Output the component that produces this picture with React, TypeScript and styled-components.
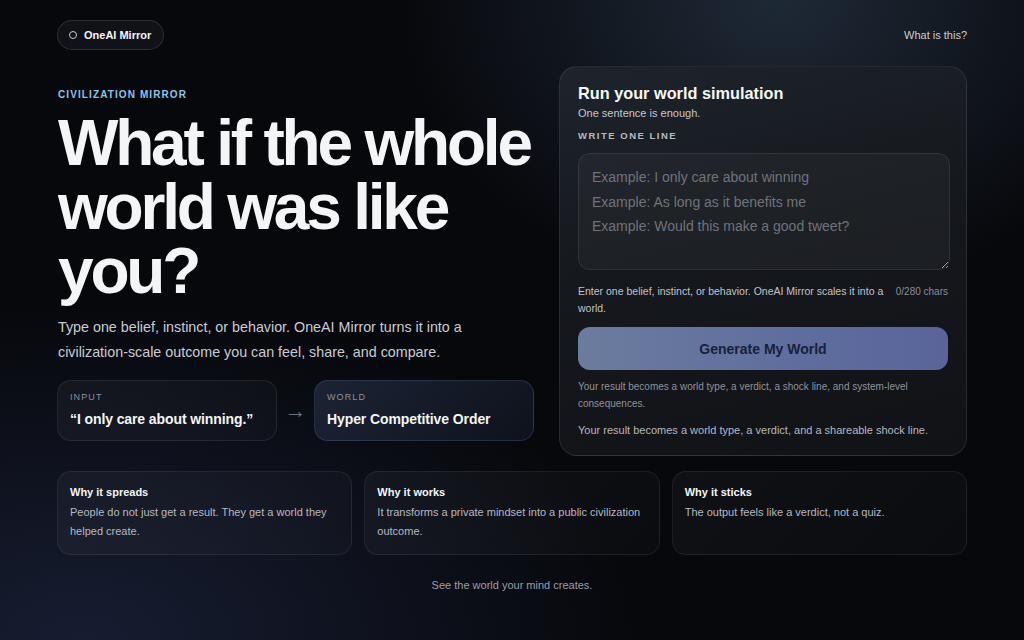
import React from "react";
import styled, { createGlobalStyle } from "styled-components";

const GlobalStyle = createGlobalStyle`
  html, body { margin: 0; padding: 0; }
  body {
    background: #07080c;
    font-family: "Liberation Sans", Arial, Helvetica, sans-serif;
    color: #f2f3f5;
    -webkit-font-smoothing: antialiased;
  }
  * { box-sizing: border-box; }
`;

const Page = styled.div`
  min-height: 640px;
  width: 100%;
  background:
    radial-gradient(ellipse 380px 300px at 76% 0%, rgba(38, 52, 68, 0.75), rgba(38, 52, 68, 0) 100%),
    radial-gradient(ellipse 560px 340px at 8% 100%, rgba(28, 36, 62, 0.75), rgba(28, 36, 62, 0) 100%),
    #07080c;
  display: flex;
  justify-content: center;
`;

const Container = styled.div`
  width: 910px;
  padding-top: 20px;
  display: flex;
  flex-direction: column;
`;

const Header = styled.header`
  display: flex;
  align-items: center;
  justify-content: space-between;
  height: 30px;
`;

const BrandPill = styled.div`
  display: inline-flex;
  align-items: center;
  gap: 7px;
  height: 30px;
  padding: 0 12px 0 11px;
  border-radius: 999px;
  border: 1px solid rgba(255, 255, 255, 0.12);
  background: #111217;
  font-size: 11px;
  font-weight: 700;
  color: #f4f5f7;
`;

const Ring = styled.span`
  width: 8px;
  height: 8px;
  border-radius: 50%;
  border: 1.5px solid #c9ccd2;
`;

const NavLink = styled.a`
  font-size: 11px;
  color: #c9ccd3;
  text-decoration: none;
`;

const Hero = styled.section`
  display: grid;
  grid-template-columns: 477px 408px;
  justify-content: space-between;
  align-items: start;
  margin-top: 16px;
`;

const Left = styled.div`
  display: flex;
  flex-direction: column;
  padding-top: 23px;
  padding-left: 1px;
`;

const Eyebrow = styled.div`
  font-size: 10px;
  line-height: 12px;
  font-weight: 700;
  letter-spacing: 1.1px;
  color: #8cc3e6;
`;

const Headline = styled.h1`
  margin: 10px 0 0;
  font-size: 64px;
  line-height: 64px;
  font-weight: 700;
  letter-spacing: -3.2px;
  color: #f4f5f7;
`;

const Lead = styled.p`
  margin: 12px 0 0;
  font-size: 14.3px;
  line-height: 25px;
  color: #c9ccd3;
`;

const FlowRow = styled.div`
  display: grid;
  grid-template-columns: 220px 1fr 220px;
  align-items: center;
  margin-top: 15px;
  margin-left: -1px;
`;

const FlowCard = styled.div<{ $accent?: boolean }>`
  height: 61px;
  padding: 10px 12px 0;
  border-radius: 14px;
  border: 1px solid ${(p) => (p.$accent ? "rgba(120, 150, 200, 0.2)" : "rgba(255, 255, 255, 0.08)")};
  background: ${(p) =>
    p.$accent
      ? "linear-gradient(135deg, rgba(30, 38, 56, 0.9), rgba(16, 20, 30, 0.9))"
      : "linear-gradient(135deg, rgba(255,255,255,0.045), rgba(255,255,255,0.02))"};
  display: flex;
  flex-direction: column;
  gap: 6px;
`;

const FlowLabel = styled.div`
  font-size: 9px;
  line-height: 12px;
  letter-spacing: 1.1px;
  color: #8d9099;
`;

const FlowValue = styled.div`
  font-size: 14px;
  line-height: 20px;
  font-weight: 700;
  color: #f4f5f7;
  letter-spacing: -0.1px;
  white-space: nowrap;
`;

const Arrow = styled.div`
  text-align: center;
  font-size: 22px;
  line-height: 22px;
  color: #6e727b;
`;

const Panel = styled.section`
  height: 390px;
  border-radius: 18px;
  border: 1px solid rgba(255, 255, 255, 0.09);
  background: linear-gradient(165deg, #1e242c 0%, #15181d 45%, #111216 100%);
  padding: 16px 18px 0;
  display: flex;
  flex-direction: column;
`;

const PanelTitle = styled.h2`
  margin: 0;
  font-size: 16.3px;
  line-height: 20px;
  font-weight: 700;
  color: #f6f7f9;
`;

const PanelSub = styled.div`
  margin-top: 3px;
  font-size: 11px;
  line-height: 14px;
  color: #c4c7ce;
`;

const FieldLabel = styled.div`
  margin-top: 10px;
  font-size: 9.5px;
  line-height: 12px;
  font-weight: 700;
  letter-spacing: 1.5px;
  color: #b7bac2;
`;

const TextArea = styled.textarea`
  margin-top: 11px;
  width: 372px;
  height: 117px;
  border-radius: 12px;
  border: 1px solid rgba(255, 255, 255, 0.08);
  background: rgba(255, 255, 255, 0.035);
  padding: 11px 13px;
  font-family: "Liberation Sans", Arial, sans-serif;
  font-size: 14px;
  line-height: 24.5px;
  color: #e6e7ea;
  resize: vertical;
  outline: none;
  &::placeholder {
    color: #6f737b;
  }
`;

const HelperRow = styled.div`
  margin-top: 13px;
  display: flex;
  justify-content: space-between;
  align-items: flex-start;
  gap: 12px;
`;

const HelperText = styled.div`
  font-size: 10.5px;
  line-height: 17px;
  color: #c0c3ca;
  max-width: 312px;
`;

const CharCount = styled.div`
  font-size: 10px;
  line-height: 17px;
  color: #8a8d95;
  white-space: nowrap;
`;

const GenerateButton = styled.button`
  margin-top: 10px;
  height: 43px;
  width: 100%;
  border: none;
  border-radius: 12px;
  background: linear-gradient(90deg, #6c7c9d 0%, #5f6d9e 60%, #5a649a 100%);
  font-family: "Liberation Sans", Arial, sans-serif;
  font-size: 14px;
  font-weight: 700;
  color: #18203a;
  cursor: pointer;
`;

const Note = styled.p<{ $strong?: boolean }>`
  margin: ${(p) => (p.$strong ? "10px 0 0" : "8px 0 0")};
  font-size: ${(p) => (p.$strong ? "11px" : "10px")};
  line-height: 17px;
  color: ${(p) => (p.$strong ? "#b5b8c0" : "#8f939b")};
`;

const Features = styled.section`
  margin-top: 15px;
  display: grid;
  grid-template-columns: repeat(3, 1fr);
  gap: 12px;
`;

const FeatureCard = styled.div`
  height: 84px;
  border-radius: 14px;
  border: 1px solid rgba(255, 255, 255, 0.07);
  background: linear-gradient(135deg, rgba(255,255,255,0.04), rgba(255,255,255,0.02));
  padding: 13px 12px 0;
`;

const FeatureTitle = styled.div`
  font-size: 11px;
  line-height: 14px;
  font-weight: 700;
  color: #f4f5f7;
`;

const FeatureBody = styled.div`
  margin-top: 4px;
  font-size: 11px;
  line-height: 19px;
  color: #b5b8c0;
`;

const Footer = styled.footer`
  margin-top: 23px;
  text-align: center;
  font-size: 11px;
  line-height: 14px;
  color: #9b9ea6;
`;

const features = [
  { title: "Why it spreads", body: "People do not just get a result. They get a world they helped create." },
  { title: "Why it works", body: "It transforms a private mindset into a public civilization outcome." },
  { title: "Why it sticks", body: "The output feels like a verdict, not a quiz." },
];

export default function App() {
  return (
    <>
      <GlobalStyle />
      <Page>
        <Container>
          <Header>
            <BrandPill>
              <Ring />
              OneAI Mirror
            </BrandPill>
            <NavLink href="#">What is this?</NavLink>
          </Header>

          <Hero>
            <Left>
              <Eyebrow>CIVILIZATION MIRROR</Eyebrow>
              <Headline>
                What if the whole
                <br />
                world was like
                <br />
                you?
              </Headline>
              <Lead>
                Type one belief, instinct, or behavior. OneAI Mirror turns it into a civilization-scale outcome you
                can feel, share, and compare.
              </Lead>
              <FlowRow>
                <FlowCard>
                  <FlowLabel>INPUT</FlowLabel>
                  <FlowValue>“I only care about winning.”</FlowValue>
                </FlowCard>
                <Arrow>→</Arrow>
                <FlowCard $accent>
                  <FlowLabel>WORLD</FlowLabel>
                  <FlowValue>Hyper Competitive Order</FlowValue>
                </FlowCard>
              </FlowRow>
            </Left>

            <Panel>
              <PanelTitle>Run your world simulation</PanelTitle>
              <PanelSub>One sentence is enough.</PanelSub>
              <FieldLabel>WRITE ONE LINE</FieldLabel>
              <TextArea
                placeholder={
                  "Example: I only care about winning\nExample: As long as it benefits me\nExample: Would this make a good tweet?"
                }
              />
              <HelperRow>
                <HelperText>Enter one belief, instinct, or behavior. OneAI Mirror scales it into a world.</HelperText>
                <CharCount>0/280 chars</CharCount>
              </HelperRow>
              <GenerateButton>Generate My World</GenerateButton>
              <Note>Your result becomes a world type, a verdict, a shock line, and system-level consequences.</Note>
              <Note $strong>Your result becomes a world type, a verdict, and a shareable shock line.</Note>
            </Panel>
          </Hero>

          <Features>
            {features.map((f) => (
              <FeatureCard key={f.title}>
                <FeatureTitle>{f.title}</FeatureTitle>
                <FeatureBody>{f.body}</FeatureBody>
              </FeatureCard>
            ))}
          </Features>

          <Footer>See the world your mind creates.</Footer>
        </Container>
      </Page>
    </>
  );
}
